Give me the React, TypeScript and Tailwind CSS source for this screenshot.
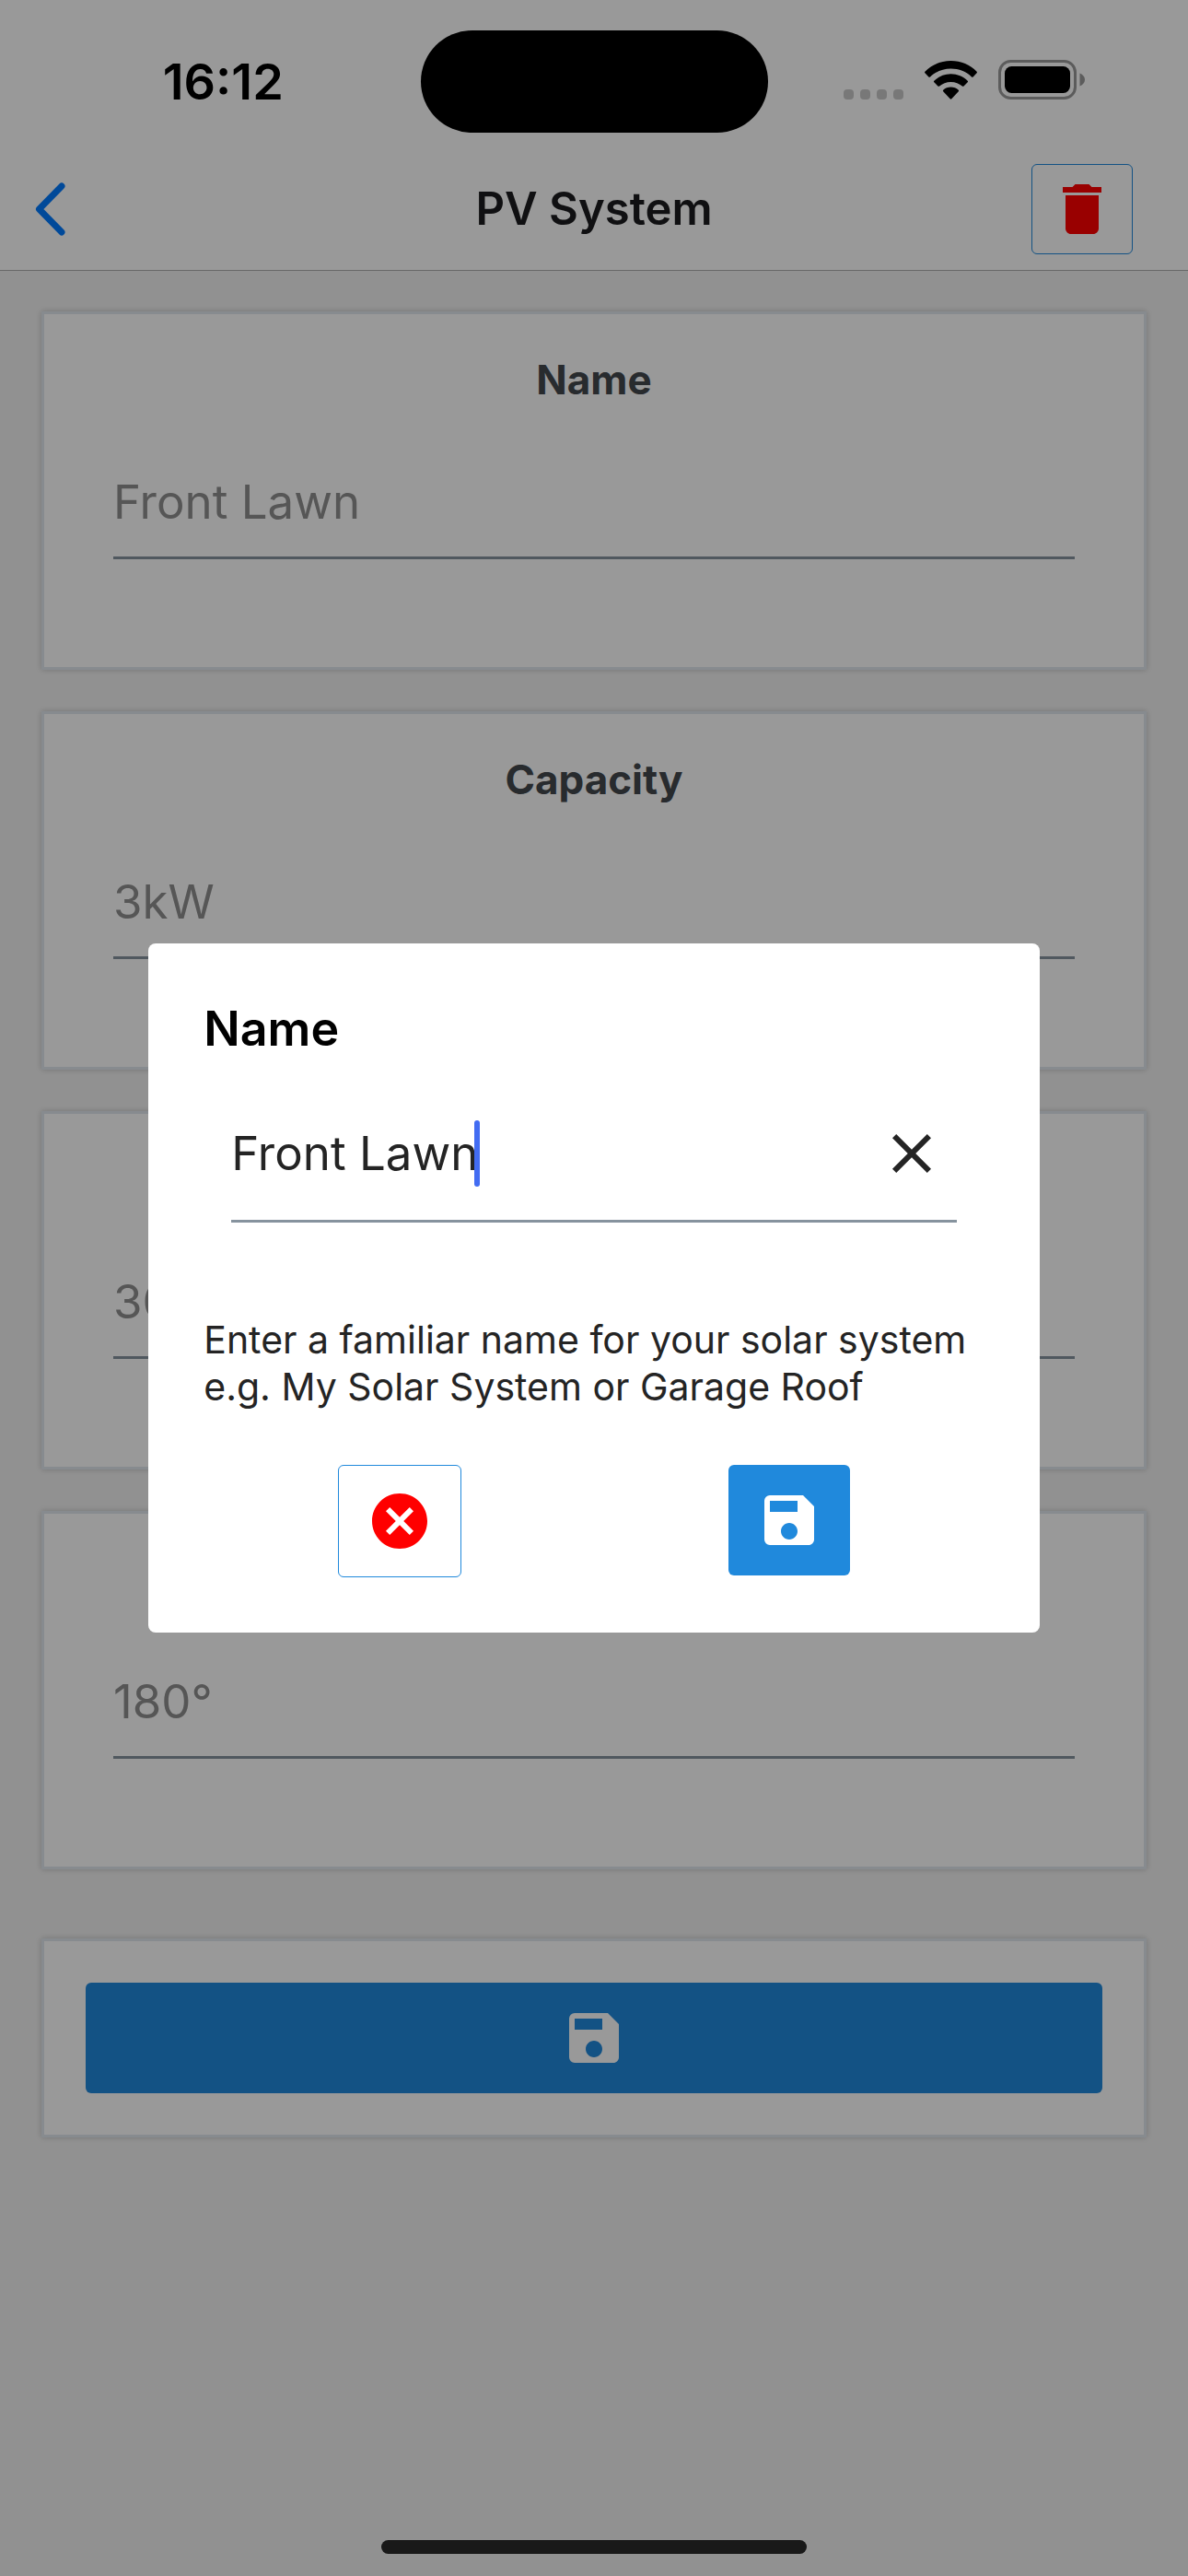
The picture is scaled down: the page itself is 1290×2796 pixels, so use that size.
import { useState } from 'react';
import { MdCancel, MdClose, MdDelete, MdSave } from 'react-icons/md';

interface Field {
    id: string;
    label: string;
    value: string;
}

const fields: Field[] = [
    { id: 'name', label: 'Name', value: 'Front Lawn' },
    { id: 'capacity', label: 'Capacity', value: '3kW' },
    { id: 'pitch', label: 'Pitch', value: '30°' },
    { id: 'azimuth', label: 'Azimuth', value: '180°' },
];

function StatusBar() {
    return (
        <div className="grid grid-cols-[1fr_auto_1fr] items-center h-[161px] pt-4">
            <div className="pl-7 text-center text-[54px] leading-[60px] font-semibold text-black">
                16:12
            </div>
            <div className="w-[377px] h-[111px] rounded-full bg-black" />
            <div className="flex items-end justify-center gap-[23px] pr-7 pb-1">
                {/* No signal */}
                <div className="flex gap-[7px]">
                    <span className="w-[11px] h-[11px] rounded-sm bg-[#c9c9c9]" />
                    <span className="w-[11px] h-[11px] rounded-sm bg-[#c9c9c9]" />
                    <span className="w-[11px] h-[11px] rounded-sm bg-[#c9c9c9]" />
                    <span className="w-[11px] h-[11px] rounded-sm bg-[#c9c9c9]" />
                </div>
                {/* Wifi */}
                <svg width="57" height="42" viewBox="0 0 57 42" fill="black">
                    <path d="M28.5 0C39.5 0 49.5 4.4 56.6 11.7Q57.3 12.5 56.6 13.3L52.6 17.4Q51.8 18.1 51 17.4C45.2 11.9 37.3 8.6 28.5 8.6S11.8 11.9 6 17.4Q5.2 18.1 4.4 17.4L.4 13.3Q-.3 12.5 .4 11.7C7.5 4.4 17.5 0 28.5 0Z" />
                    <path d="M28.5 14.3C35.6 14.3 42 17.1 46.7 21.7Q47.5 22.5 46.7 23.3L42.5 27.5Q41.7 28.2 40.9 27.5C37.7 24.6 33.3 22.9 28.5 22.9S19.3 24.6 16.1 27.5Q15.3 28.2 14.5 27.5L10.3 23.3Q9.5 22.5 10.3 21.7C15 17.1 21.4 14.3 28.5 14.3Z" />
                    <path d="M28.5 28.6C31.7 28.6 34.6 29.8 36.8 31.7Q37.6 32.5 36.8 33.3L29.3 41.3Q28.5 42 27.7 41.3L20.2 33.3Q19.4 32.5 20.2 31.7C22.4 29.8 25.3 28.6 28.5 28.6Z" />
                </svg>
                {/* Battery */}
                <svg width="95" height="43" viewBox="0 0 95 43">
                    <rect
                        x="1.5"
                        y="1.5"
                        width="82"
                        height="40"
                        rx="12"
                        fill="none"
                        stroke="#9a9a9a"
                        strokeWidth="3"
                    />
                    <rect x="7" y="7" width="71" height="29" rx="7.5" fill="black" />
                    <path d="M88.5 14.5C92 16 94 18.5 94 21.5S92 27 88.5 28.5Z" fill="#9a9a9a" />
                </svg>
            </div>
        </div>
    );
}

function Header() {
    return (
        <header className="bg-white border-b border-[#aeaeae]">
            <StatusBar />
            <nav className="grid grid-cols-[1fr_auto_1fr] items-center h-[132px]">
                <div className="pl-[38px]">
                    <button className="block" title="Back">
                        <svg
                            width="33"
                            height="58"
                            viewBox="0 0 33 58"
                            fill="none"
                            stroke="#007aff"
                            strokeWidth="7"
                            strokeLinecap="round"
                            strokeLinejoin="round"
                        >
                            <path d="M29 4L4.5 29L29 54" />
                        </svg>
                    </button>
                </div>
                <h1 className="text-[49px] leading-[60px] font-semibold text-[#1c1c1e]">
                    PV System
                </h1>
                <div className="flex justify-end pr-[60px]">
                    <button
                        className="flex items-center justify-center w-[110px] h-[98px] rounded-md border border-[#2089dc]"
                        title="Delete"
                    >
                        <MdDelete className="size-[72px] text-[#ff0000]" />
                    </button>
                </div>
            </nav>
        </header>
    );
}

function FieldCard({ id, label, value }: Field) {
    return (
        <section className="p-[45px] bg-white border-[3px] border-[#e1e8ee] shadow-[0_0_6px_rgba(0,0,0,0.2)]">
            <label
                htmlFor={id}
                className="block mb-[45px] text-center text-[44px] leading-[53px] font-bold text-[#43484d]"
            >
                {label}
            </label>
            <div className="px-[30px] pb-[72px]">
                <input
                    id={id}
                    className="block w-full h-[123px] border-b-[3px] border-[#86939e] text-[51px] text-[#909090]"
                    value={value}
                    disabled
                />
            </div>
        </section>
    );
}

interface NameDialogProps {
    name: string;
    setName: React.Dispatch<React.SetStateAction<string>>;
}

function NameDialog({ name, setName }: NameDialogProps) {
    return (
        <div className="fixed inset-0 flex items-center justify-center bg-black/40">
            <div
                className="w-3/4 p-[60px] rounded-lg bg-white"
                role="dialog"
                aria-labelledby="dialog-title"
            >
                <h2
                    id="dialog-title"
                    className="mb-[30px] text-[52px] leading-[66px] font-semibold text-black"
                >
                    Name
                </h2>
                {/* Text box with caret and clear button */}
                <div className="flex items-center h-[147px] mx-[30px] pr-[13px] border-b-[3px] border-[#86939e]">
                    <input
                        className="field-sizing-content text-[51px] text-[#242424] caret-transparent outline-none"
                        aria-labelledby="dialog-title"
                        value={name}
                        onChange={(e) => setName(e.target.value)}
                    />
                    <span className="-ml-1 w-[6px] h-[72px] rounded-full bg-[#426cf2]" />
                    <button
                        className="ml-auto"
                        title="Clear"
                        onClick={() => setName('')}
                    >
                        <MdClose className="size-[72px] text-[#242424]" />
                    </button>
                </div>
                <p className="mt-[102px] mb-[59px] text-[41px] leading-[51px] text-[#242424]">
                    Enter a familiar name for your solar system
                    <br />
                    e.g. My Solar System or Garage Roof
                </p>
                <div className="flex items-start justify-around">
                    <button
                        className="flex items-center justify-center w-[134px] h-[122px] rounded-md border border-[#2089dc]"
                        title="Cancel"
                    >
                        <MdCancel className="size-[72px] text-[#ff0000]" />
                    </button>
                    <button
                        className="flex items-center justify-center w-[132px] h-[120px] rounded-md bg-[#2089dc]"
                        title="Save name"
                    >
                        <MdSave className="size-[72px] text-white" />
                    </button>
                </div>
            </div>
        </div>
    );
}

export default function App() {
    const [name, setName] = useState('Front Lawn');

    return (
        <div className="flex flex-col min-h-screen bg-[#f2f2f2] font-['Inter',sans-serif]">
            <Header />
            <main className="flex flex-col gap-[45px] px-[45px] pt-11">
                {fields.map((field) => (
                    <FieldCard key={field.id} {...field} />
                ))}
                <section className="mt-[30px] p-[45px] bg-white border-[3px] border-[#e1e8ee] shadow-[0_0_6px_rgba(0,0,0,0.2)]">
                    <button
                        className="flex items-center justify-center w-full h-[120px] rounded-md bg-[#2089dc]"
                        title="Save system"
                    >
                        <MdSave className="size-[72px] text-white" />
                    </button>
                </section>
            </main>
            {/* Home indicator */}
            <div className="mt-auto mx-auto mb-6 w-[462px] h-[15px] rounded-full bg-[#2a2a2a]" />
            <NameDialog name={name} setName={setName} />
        </div>
    );
}
